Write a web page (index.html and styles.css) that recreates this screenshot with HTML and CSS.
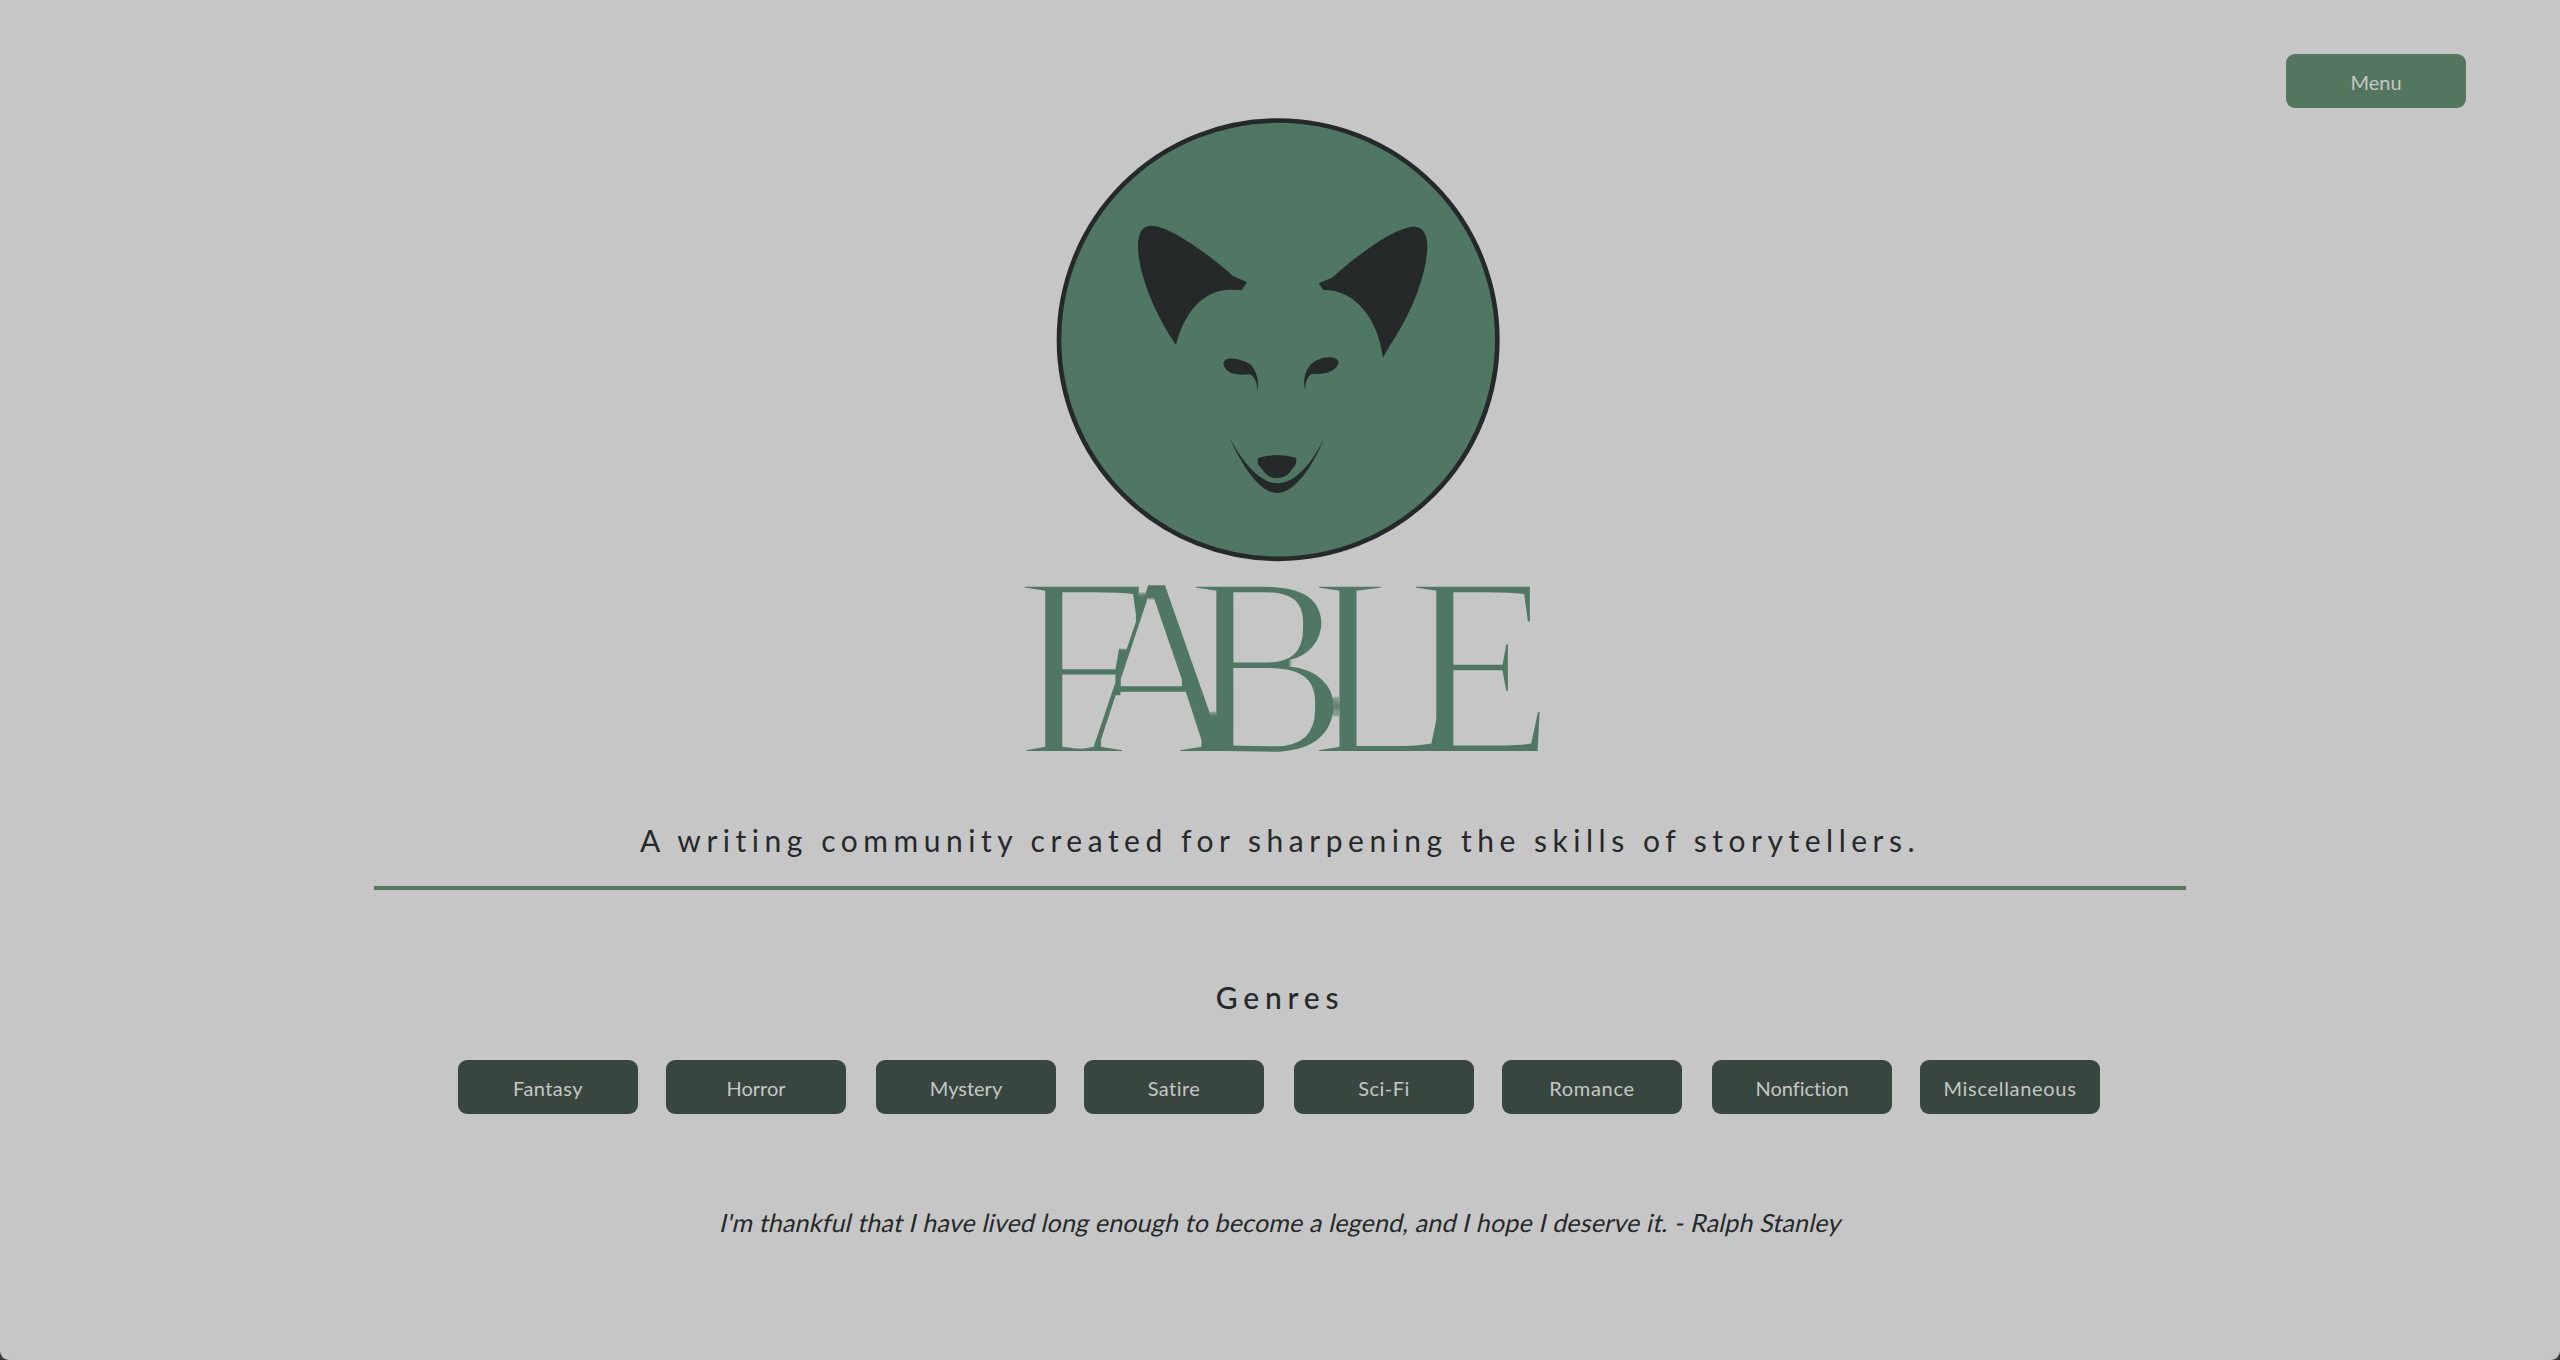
FILE: index.html
```html
<!DOCTYPE html>
<html lang="en">
<head>
<meta charset="utf-8">
<title>Fable</title>
<link rel="stylesheet" href="styles.css">
</head>
<body>
<div class="page">
  <header class="topbar"><button class="button button-menu">Menu</button></header>
  <main class="main">
    <svg class="fox" viewBox="45 36 1350 1350" role="img" aria-label="Fox">
      <circle class="fox-face" cx="714.5" cy="719" r="657.5"/>
      <g class="fox-ink">
        <path d="M408 735C340 635 294 515 294 438C294 397 308 377 334 377C380 377 480 440 579 528L621 547L605 570C590 571 583 569 570 569C492 569 432 636 408 735Z"/>
        <path d="M1029 773C1014 655 944 568 850 570L836 550L876 533C985 436 1077 380 1124 380C1148 381 1162 401 1162 441C1160 514 1125 615 1071 703Q1045 743 1029 773Z"/>
        <path d="M550 790C553 774 577 773 599 779Q619 784 630 792C650 812 657 840 653 874C651 850 646 832 630 823C585 828 555 819 550 790Z"/>
        <path d="M896 787C891 770 865 769 842 776Q826 781 817 789C796 809 788 835 795 870C797 845 801 830 815 821C861 826 892 810 896 787Z"/>
        <path d="M656 1073Q712 1057 767 1073C772 1082 768 1097 758 1105C748 1118 742 1134 711 1134C680 1134 674 1116 664 1105C652 1093 650 1084 656 1073Z"/>
        <path d="M565 1005C602 1079 657 1150 713 1150C768 1150 820 1085 855 1009C817 1104 763 1179 711 1179C662 1179 609 1106 565 1005Z"/>
      </g>
    </svg>
    <svg class="wordmark" viewBox="0 0 540 200">
      <filter id="thin" x="-10%" y="-30%" width="120%" height="160%"><feMorphology operator="erode" radius="3"/></filter>
      <g filter="url(#thin)"><text transform="scale(.94 1)" x="5 64 187 318 421" y="184">FABLE</text></g>
    </svg>
    <h2 class="tagline">A writing community created for sharpening the skills of storytellers.</h2>
    <h3 class="heading">Genres</h3>
    <nav class="genres">
      <div class="pair"><button class="button wide">Fantasy</button><button class="button">Horror</button></div>
      <div class="pair"><button class="button">Mystery</button><button class="button wide">Satire</button></div>
      <div class="pair"><button class="button wide">Sci-Fi</button><button class="button wider">Romance</button></div>
      <div class="pair"><button class="button">Nonfiction</button><button class="button wider">Miscellaneous</button></div>
    </nav>
    <p class="quote">I'm thankful that I have lived long enough to become a legend, and I hope I deserve it. - Ralph Stanley</p>
  </main>
</div>
</body>
</html>
```
FILE: styles.css
```css
html {
  background: #3f3832;
}

body {
  margin: 0;
  font-family: Lato, "Open Sans", sans-serif;
  color: #25292a;
}

.page {
  box-sizing: border-box;
  width: 2560px;
  height: 1360px;
  overflow: hidden;
  background: #c6c6c6;
  border-radius: 0 0 9px 9px;
}

.topbar {
  display: flex;
  justify-content: flex-end;
  padding: 54px 94px 4px;
}

.main {
  display: flex;
  flex-direction: column;
  align-items: center;
}

.button {
  width: 180px;
  height: 54px;
  padding: 2px 0 0;
  border: 0;
  border-radius: 9px;
  background: #374740;
  color: #c6c6c6;
  font: 20px/52px Lato, "Open Sans", sans-serif;
  font-variant-ligatures: none;
}

.button-menu {
  background: #53765f;
}

.wide {
  letter-spacing: 0.45px;
}

.wider {
  letter-spacing: 0.7px;
}

.fox {
  display: block;
  width: 450px;
  height: 450px;
}

.fox-face {
  fill: #4f7763;
  stroke: #25292a;
  stroke-width: 14;
}

.fox-ink {
  fill: #25292a;
}

.wordmark {
  display: block;
  width: 540px;
  height: 200px;
  margin-top: 8px;
  overflow: visible;
  fill: #4f7763;
  font: 260px "Liberation Serif", serif;
}

.tagline {
  box-sizing: border-box;
  width: 1812px;
  height: 120px;
  margin: 0;
  padding-top: 50px;
  border-bottom: 4px solid #53765f;
  font-size: 30px;
  line-height: 40px;
  font-weight: 400;
  letter-spacing: 5.52px;
  text-align: center;
}

.heading {
  margin: 87px 0 43px;
  font-size: 30px;
  line-height: 40px;
  font-weight: 500;
  letter-spacing: 5.8px;
}

.genres {
  display: flex;
  gap: 30px;
  margin-right: 2px;
}

.pair {
  display: flex;
  gap: 28px;
}

.quote {
  margin: 91px 0 0;
  padding-left: 4px;
  font-size: 25px;
  line-height: 34px;
  letter-spacing: 0.17px;
  transform: skewX(-13deg);
}
```
